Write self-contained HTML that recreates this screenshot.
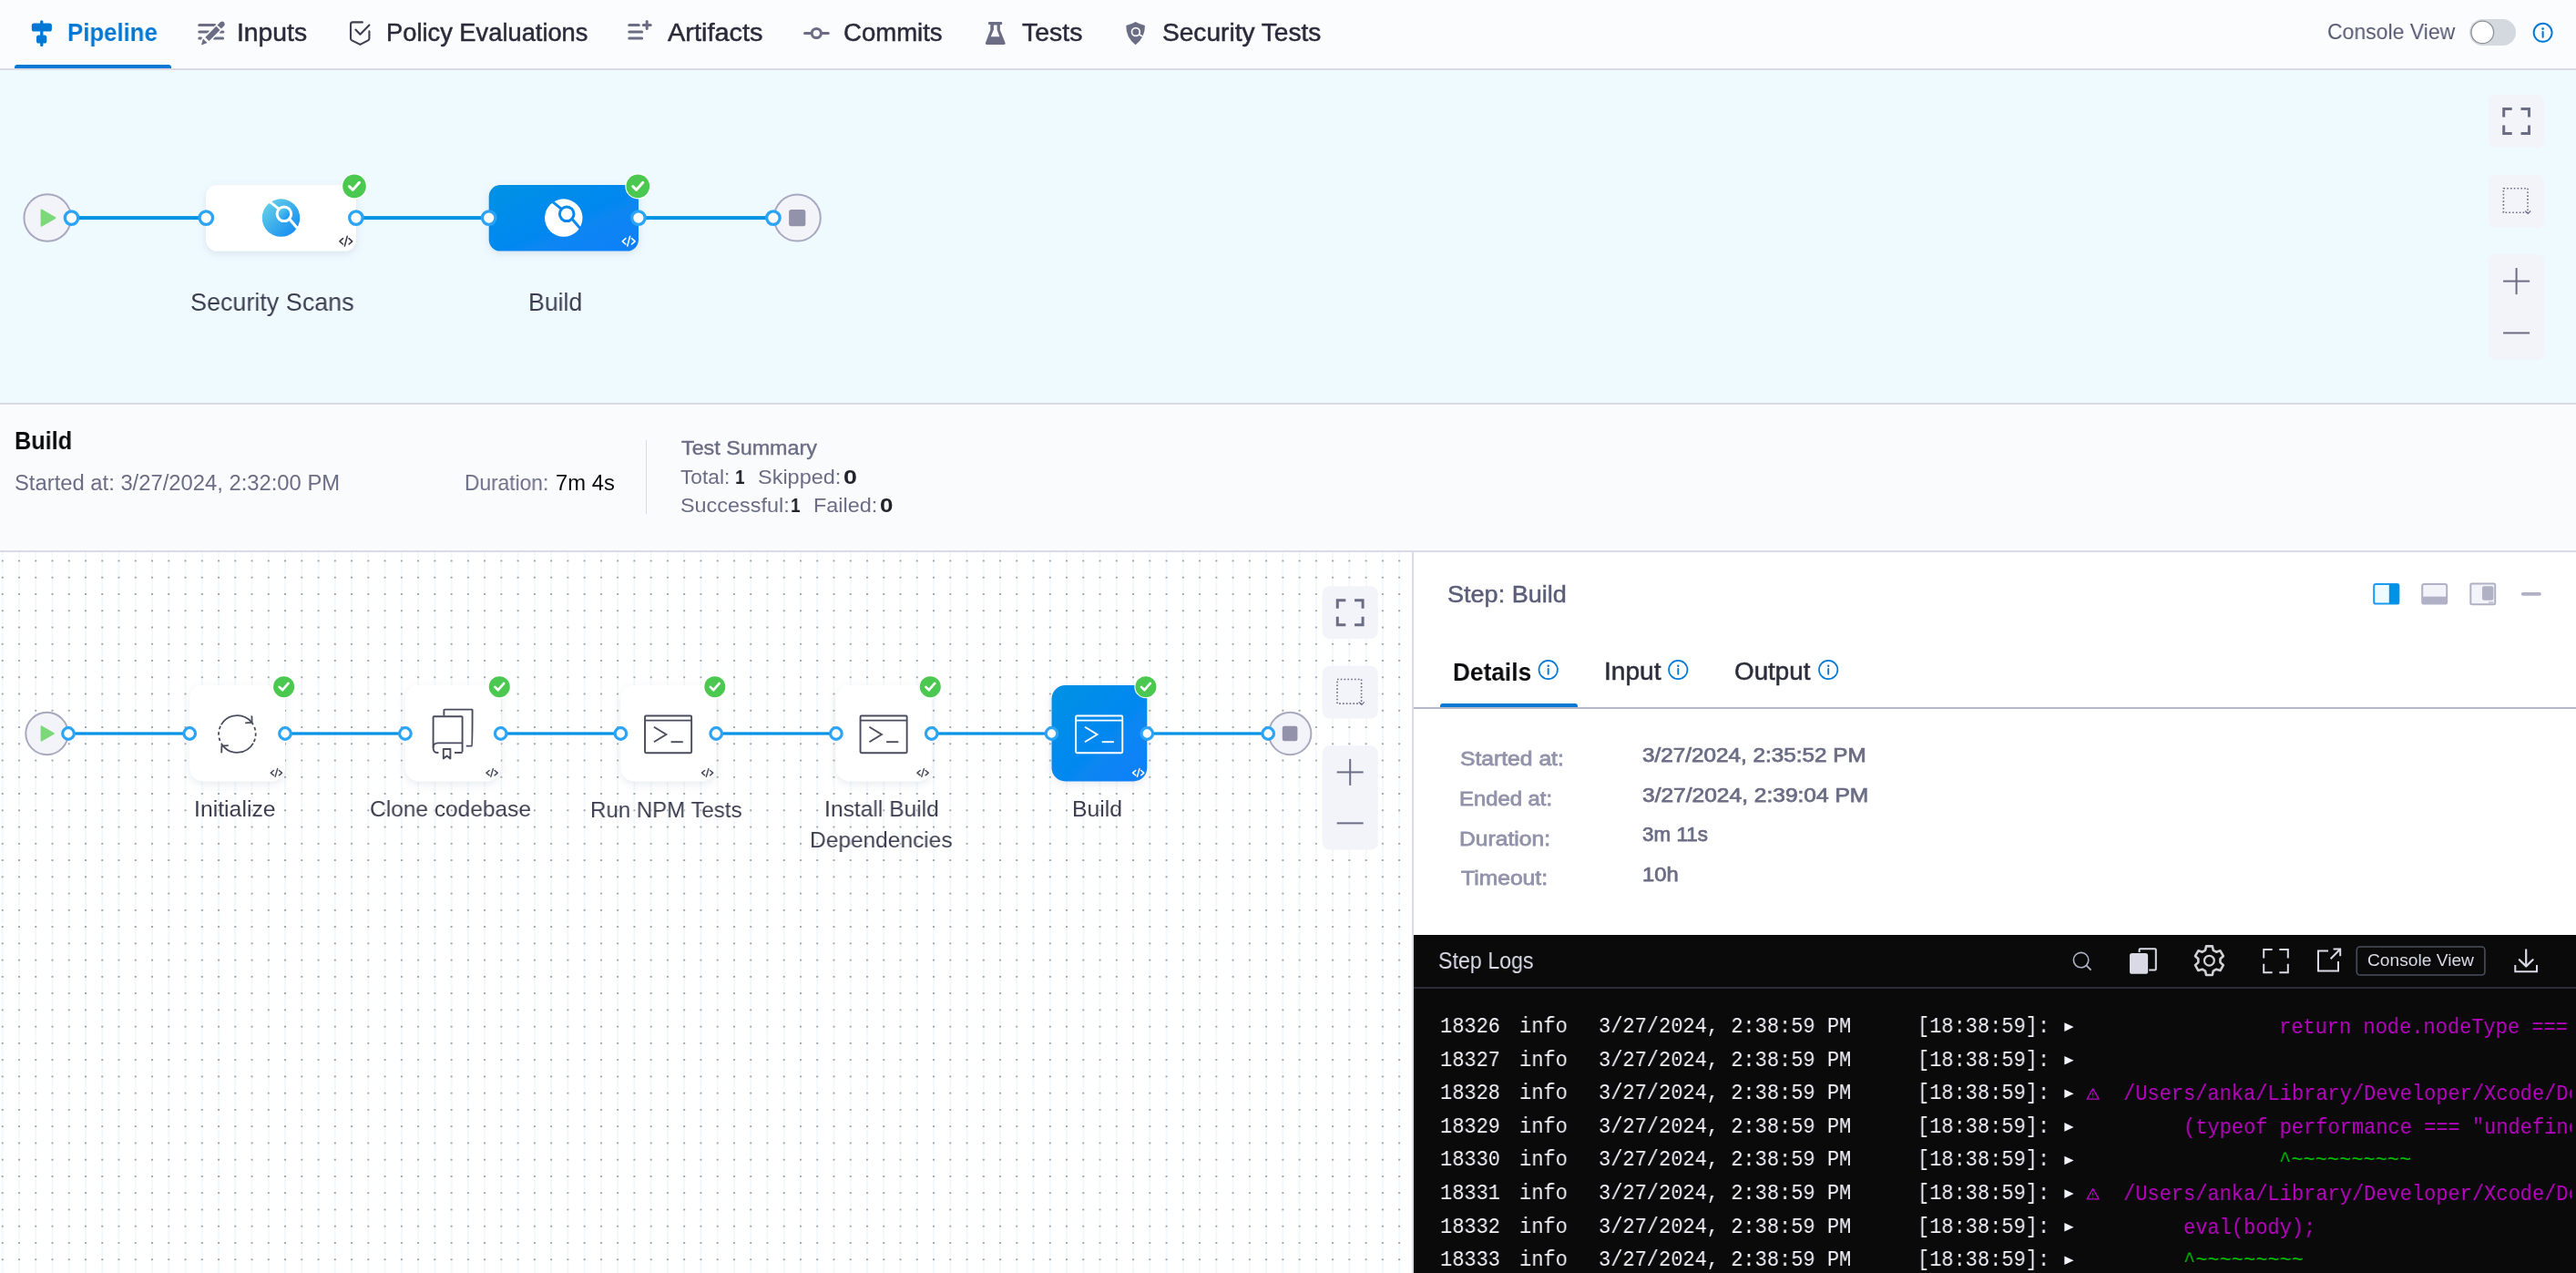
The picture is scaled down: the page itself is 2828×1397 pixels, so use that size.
<!DOCTYPE html><html><head><meta charset="utf-8"><style>
*{margin:0;padding:0;box-sizing:border-box}
html,body{width:2828px;height:1397px;overflow:hidden;background:#FFFFFF}
body{position:relative;font-family:"Liberation Sans",sans-serif}
.t{position:absolute;white-space:pre;line-height:1;transform-origin:0 0;will-change:transform;-webkit-font-smoothing:antialiased}
.m{position:absolute;white-space:pre;line-height:1;will-change:transform;font-family:"Liberation Mono",monospace;font-size:24px;transform-origin:0 0;transform:scaleX(0.9167)}
.b{position:absolute}
</style></head><body><div class="b" style="left:0.00px;top:0.00px;width:2828.00px;height:75.00px;background:#FBFCFE"></div><div class="b" style="left:0.00px;top:75.00px;width:2828.00px;height:2.00px;background:#D9DAE5"></div><div class="b" style="left:16.25px;top:71.00px;width:171.65px;height:4.00px;background:#0278D5;border-radius:3px 3px 0 0"></div><div class="b" style="left:0.00px;top:77.00px;width:2828.00px;height:365.00px;background:#EFFAFF"></div><div class="b" style="left:0.00px;top:442.00px;width:2828.00px;height:2.00px;background:#D9DAE5"></div><div class="b" style="left:0.00px;top:444.00px;width:2828.00px;height:160.00px;background:#FAFBFD"></div><div class="b" style="left:708.50px;top:483.40px;width:1.50px;height:81.00px;background:#D9DAE5"></div><div class="b" style="left:0.00px;top:604.00px;width:2828.00px;height:2.00px;background:#D9DAE5"></div><div class="b" style="left:0.00px;top:606.00px;width:1550.00px;height:791.00px;background:#FFFFFF"></div><div class="b" style="left:1550.00px;top:606.00px;width:2.00px;height:791.00px;background:#D9DAE5"></div><div class="b" style="left:1552.00px;top:606.00px;width:1276.00px;height:791.00px;background:#FFFFFF"></div><div class="b" style="left:1552.00px;top:776.30px;width:1276.00px;height:1.80px;background:#B7B9CA"></div><div class="b" style="left:1581.00px;top:772.20px;width:151.40px;height:4.20px;background:#0278D5;border-radius:3px 3px 0 0"></div><div class="b" style="left:1552.00px;top:1026.00px;width:1276.00px;height:371.00px;background:#0A0A0B"></div><div class="b" style="left:1552.00px;top:1083.20px;width:1276.00px;height:2.00px;background:#2A2B36"></div><svg class="b" style="left:0;top:0" width="2828" height="1397" viewBox="0 0 2828 1397"><defs>
<linearGradient id="gScan" x1="0" y1="0" x2="1" y2="1"><stop offset="0" stop-color="#6FD8E6"/><stop offset="1" stop-color="#0A84F2"/></linearGradient>
<linearGradient id="gBuild" x1="0" y1="0" x2="1" y2="1"><stop offset="0" stop-color="#0092E4"/><stop offset="1" stop-color="#0B7FFA"/></linearGradient>
<linearGradient id="gBuild2" x1="0" y1="0" x2="1" y2="1"><stop offset="0" stop-color="#0092E4"/><stop offset="1" stop-color="#0B7FFA"/></linearGradient>
<pattern id="pDots" width="18.255" height="18.255" patternUnits="userSpaceOnUse" x="1.74" y="614.5"><rect x="0" y="0" width="2" height="2" fill="#A0A4A9"/><rect x="0.1" y="3.1" width="1.8" height="13.7" fill="#F1F8FC"/></pattern>
<filter id="shTop" x="-20%" y="-20%" width="140%" height="160%"><feDropShadow dx="0" dy="3" stdDeviation="4" flood-color="#60718A" flood-opacity="0.16"/></filter>
<filter id="shBot" x="-20%" y="-20%" width="140%" height="150%"><feDropShadow dx="0" dy="3" stdDeviation="4" flood-color="#60718A" flood-opacity="0.14"/></filter>
</defs><rect x="0.00" y="606.00" width="1550.00" height="791.00" rx="0.00" fill="url(#pDots)" stroke="none" stroke-width="0.00" /><rect x="44.10" y="22.20" width="3.30" height="28.80" rx="1.60" fill="#0278D5" stroke="none" stroke-width="0.00" /><rect x="34.80" y="25.60" width="22.10" height="8.90" rx="2.60" fill="#0278D5" stroke="none" stroke-width="0.00" /><rect x="40.00" y="38.50" width="11.30" height="9.00" rx="2.60" fill="#0278D5" stroke="none" stroke-width="0.00" /><line x1="218.80" y1="27.40" x2="236.00" y2="27.40" stroke="#6B6D85" stroke-width="3.00" stroke-linecap="round" /><line x1="218.80" y1="34.90" x2="229.00" y2="34.90" stroke="#6B6D85" stroke-width="3.00" stroke-linecap="round" /><line x1="242.00" y1="34.90" x2="244.80" y2="34.90" stroke="#6B6D85" stroke-width="3.00" stroke-linecap="round" /><line x1="218.80" y1="42.00" x2="221.00" y2="42.00" stroke="#6B6D85" stroke-width="3.00" stroke-linecap="round" /><line x1="235.00" y1="42.00" x2="244.60" y2="42.00" stroke="#6B6D85" stroke-width="3.00" stroke-linecap="round" /><path d="M 225.3 40.9 L 237.3 28.8 L 241.5 33.0 L 229.5 45.1 Z" fill="#FBFCFE" stroke="#FBFCFE" stroke-width="3.00" stroke-linejoin="round"/><path d="M 221.0 49.6 L 222.9 42.6 L 227.6 47.1 Z" fill="#FBFCFE" stroke="#FBFCFE" stroke-width="3.00" stroke-linejoin="round"/><path d="M 238.6 27.4 L 241.9 24.2 Q 244.4 22.6 246.1 24.6 Q 247.6 26.6 245.7 28.8 L 242.9 31.6 Z" fill="#FBFCFE" stroke="#FBFCFE" stroke-width="3.00" stroke-linejoin="round"/><path d="M 225.3 40.9 L 237.3 28.8 L 241.5 33.0 L 229.5 45.1 Z" fill="#6B6D85" stroke="none" stroke-width="0.00" /><path d="M 221.0 49.6 L 222.9 42.6 L 227.6 47.1 Z" fill="#6B6D85" stroke="none" stroke-width="0.00" /><path d="M 238.6 27.4 L 241.9 24.2 Q 244.4 22.6 246.1 24.6 Q 247.6 26.6 245.7 28.8 L 242.9 31.6 Z" fill="#6B6D85" stroke="none" stroke-width="0.00" /><path d="M 397.9 24.4 L 387.4 24.4 Q 385.0 24.4 385.0 26.8 L 385.0 42.3 Q 385.0 43.6 386.4 44.4 L 395.4 48.9 L 404.0 44.4 Q 405.4 43.6 405.4 42.3 L 405.4 34.2" fill="none" stroke="#3E4052" stroke-width="2.10" stroke-linecap="round" stroke-linejoin="round"/><path d="M 390.4 32.6 L 395.4 37.8 L 405.4 27.5" fill="none" stroke="#3E4052" stroke-width="2.10" stroke-linecap="round" stroke-linejoin="round"/><line x1="690.80" y1="27.40" x2="701.20" y2="27.40" stroke="#6B6D85" stroke-width="3.00" stroke-linecap="round" /><line x1="690.80" y1="34.90" x2="704.70" y2="34.90" stroke="#6B6D85" stroke-width="3.00" stroke-linecap="round" /><line x1="690.80" y1="42.00" x2="704.70" y2="42.00" stroke="#6B6D85" stroke-width="3.00" stroke-linecap="round" /><line x1="710.20" y1="23.50" x2="710.20" y2="31.40" stroke="#6B6D85" stroke-width="3.00" stroke-linecap="round" /><line x1="706.30" y1="27.40" x2="714.20" y2="27.40" stroke="#6B6D85" stroke-width="3.00" stroke-linecap="round" /><line x1="883.60" y1="36.50" x2="909.20" y2="36.50" stroke="#6B6D85" stroke-width="3.20" stroke-linecap="round" /><circle cx="896.30" cy="36.50" r="5.10" fill="#FBFCFE" stroke="#6B6D85" stroke-width="3.00" /><path d="M 1085.8 24.1 L 1099.4 24.1 Q 1100.2 24.1 1100.2 25.5 Q 1100.2 27.0 1099.4 27.0 L 1097.9 27.0 L 1097.9 33.0 L 1103.4 46.6 Q 1104.3 49.1 1101.8 49.1 L 1083.7 49.1 Q 1081.2 49.1 1082.1 46.6 L 1087.3 33.0 L 1087.3 27.0 L 1085.8 27.0 Q 1085.0 27.0 1085.0 25.5 Q 1085.0 24.1 1085.8 24.1 Z M 1090.9 27.6 L 1094.6 27.6 L 1094.6 32.8 L 1097.4 40.2 L 1087.7 40.2 L 1090.9 32.8 Z" fill="#6B6D85" stroke="none" stroke-width="0.00" fill-rule="evenodd"/><path d="M 1246.6 24.0 Q 1251.5 26.8 1256.9 28.0 Q 1257.3 41.0 1246.6 49.2 Q 1235.9 41.0 1236.3 28.0 Q 1241.7 26.8 1246.6 24.0 Z" fill="#6B6D85" stroke="none" stroke-width="0.00" /><circle cx="1246.90" cy="35.00" r="4.40" fill="#6B6D85" stroke="#FBFCFE" stroke-width="1.70" /><line x1="1250.20" y1="37.80" x2="1257.50" y2="41.50" stroke="#FBFCFE" stroke-width="1.80" stroke-linecap="butt" /><rect x="2711.00" y="21.00" width="51.00" height="29.00" rx="14.50" fill="#D4D9DF" stroke="none" stroke-width="0.00" /><circle cx="2725.30" cy="35.40" r="12.30" fill="#FFFFFF" stroke="#8E9298" stroke-width="1.30" /><circle cx="2791.60" cy="35.80" r="10.00" fill="none" stroke="#0278D5" stroke-width="1.90" /><circle cx="2791.60" cy="31.60" r="1.30" fill="#0278D5" stroke="none" stroke-width="0.00" /><line x1="2791.60" y1="35.00" x2="2791.60" y2="40.80" stroke="#0278D5" stroke-width="2.10" stroke-linecap="round" /><rect x="78.50" y="237.10" width="147.80" height="4.00" rx="0.00" fill="#0092E4" stroke="none" stroke-width="0.00" /><rect x="390.90" y="237.10" width="145.80" height="4.00" rx="0.00" fill="#0092E4" stroke="none" stroke-width="0.00" /><rect x="700.90" y="237.10" width="148.00" height="4.00" rx="0.00" fill="#0092E4" stroke="none" stroke-width="0.00" /><circle cx="52.20" cy="239.10" r="25.75" fill="#F3F3FA" stroke="#A8A8BF" stroke-width="2.00" /><path d="M 45.60 230.50 L 60.40 239.10 L 45.60 247.70 Z" fill="#7DD87A" stroke="#7DD87A" stroke-width="2.00" stroke-linejoin="round"/><circle cx="875.30" cy="239.10" r="25.50" fill="#F3F3FA" stroke="#A8A8BF" stroke-width="2.00" /><rect x="866.10" y="230.00" width="18.20" height="18.20" rx="2.50" fill="#9293AB" stroke="none" stroke-width="0.00" /><rect x="226.00" y="203.00" width="165.00" height="72.60" rx="12.50" fill="#FFFFFF" stroke="none" stroke-width="0.00" filter="url(#shTop)"/><rect x="536.70" y="203.00" width="164.30" height="72.60" rx="12.50" fill="url(#gBuild)" stroke="none" stroke-width="0.00" filter="url(#shTop)"/><circle cx="308.50" cy="239.10" r="20.75" fill="url(#gScan)" stroke="none" stroke-width="0.00" /><circle cx="311.90" cy="234.80" r="7.80" fill="url(#gScan)" stroke="#FFFFFF" stroke-width="3.00" /><line x1="296.50" y1="221.60" x2="307.10" y2="230.20" stroke="#FFFFFF" stroke-width="3.00" stroke-linecap="butt" /><line x1="317.20" y1="239.80" x2="326.50" y2="250.60" stroke="#FFFFFF" stroke-width="3.00" stroke-linecap="butt" /><circle cx="618.80" cy="239.10" r="20.75" fill="#FFFFFF" stroke="none" stroke-width="0.00" /><circle cx="622.20" cy="234.80" r="7.80" fill="#FFFFFF" stroke="url(#gBuild)" stroke-width="3.00" /><line x1="606.80" y1="221.60" x2="617.40" y2="230.20" stroke="url(#gBuild)" stroke-width="3.00" stroke-linecap="butt" /><line x1="627.50" y1="239.80" x2="636.80" y2="250.60" stroke="url(#gBuild)" stroke-width="3.00" stroke-linecap="butt" /><path d="M 376.49 261.58 L 372.89 264.82 L 376.49 268.06 M 383.11 261.58 L 386.71 264.82 L 383.11 268.06 M 381.24 259.20 L 378.36 270.00" fill="none" stroke="#383946" stroke-width="1.50" stroke-linecap="round" stroke-linejoin="round"/><path d="M 686.89 261.58 L 683.29 264.82 L 686.89 268.06 M 693.51 261.58 L 697.11 264.82 L 693.51 268.06 M 691.64 259.20 L 688.76 270.00" fill="none" stroke="#FFFFFF" stroke-width="1.50" stroke-linecap="round" stroke-linejoin="round"/><circle cx="78.50" cy="239.10" r="7.25" fill="#FFFFFF" stroke="#2CA4F6" stroke-width="3.30" /><circle cx="226.30" cy="239.10" r="7.25" fill="#FFFFFF" stroke="#2CA4F6" stroke-width="3.30" /><circle cx="390.90" cy="239.10" r="7.25" fill="#FFFFFF" stroke="#2CA4F6" stroke-width="3.30" /><circle cx="536.70" cy="239.10" r="7.25" fill="#FFFFFF" stroke="#2CA4F6" stroke-width="3.30" /><circle cx="700.90" cy="239.10" r="7.25" fill="#FFFFFF" stroke="#2CA4F6" stroke-width="3.30" /><circle cx="848.90" cy="239.10" r="7.25" fill="#FFFFFF" stroke="#2CA4F6" stroke-width="3.30" /><circle cx="389.00" cy="204.40" r="13.98" fill="#FFFFFF" stroke="none" stroke-width="0.00" /><circle cx="389.00" cy="204.40" r="12.80" fill="#4BC84F" stroke="none" stroke-width="0.00" /><path d="M 383.49 204.60 L 387.42 208.34 L 394.51 200.26" fill="none" stroke="#FFFFFF" stroke-width="2.95" stroke-linecap="round" stroke-linejoin="round"/><circle cx="700.30" cy="204.40" r="13.98" fill="#FFFFFF" stroke="none" stroke-width="0.00" /><circle cx="700.30" cy="204.40" r="12.80" fill="#4BC84F" stroke="none" stroke-width="0.00" /><path d="M 694.79 204.60 L 698.72 208.34 L 705.81 200.26" fill="none" stroke="#FFFFFF" stroke-width="2.95" stroke-linecap="round" stroke-linejoin="round"/><rect x="2732.00" y="104.00" width="61.20" height="57.80" rx="8.00" fill="#F3F3FA" stroke="none" stroke-width="0.00" /><rect x="2732.00" y="192.00" width="61.20" height="57.80" rx="8.00" fill="#F3F3FA" stroke="none" stroke-width="0.00" /><rect x="2732.00" y="279.00" width="61.20" height="116.00" rx="8.00" fill="#F3F3FA" stroke="none" stroke-width="0.00" /><path d="M 2757.70 119.42 L 2748.70 119.42 L 2748.70 128.42 M 2757.70 146.38 L 2748.70 146.38 L 2748.70 137.38 M 2767.50 119.42 L 2776.50 119.42 L 2776.50 128.42 M 2767.50 146.38 L 2776.50 146.38 L 2776.50 137.38 " fill="none" stroke="#6B6D85" stroke-width="3.00" /><rect x="2748.40" y="206.70" width="26.60" height="26.60" rx="0.00" fill="none" stroke="#6B6D85" stroke-width="1.60" stroke-dasharray="1.6 2.2"/><path d="M 2772.20 231.50 l 3 3 l 3 -3" fill="none" stroke="#6B6D85" stroke-width="1.20" /><line x1="2748.10" y1="308.58" x2="2777.10" y2="308.58" stroke="#6B6D85" stroke-width="2.00" stroke-linecap="butt" /><line x1="2762.60" y1="294.08" x2="2762.60" y2="323.08" stroke="#6B6D85" stroke-width="2.00" stroke-linecap="butt" /><line x1="2748.10" y1="365.42" x2="2777.10" y2="365.42" stroke="#6B6D85" stroke-width="2.00" stroke-linecap="butt" /><rect x="75.00" y="803.40" width="133.20" height="3.20" rx="0.00" fill="#0092E4" stroke="none" stroke-width="0.00" /><rect x="313.00" y="803.40" width="131.90" height="3.20" rx="0.00" fill="#0092E4" stroke="none" stroke-width="0.00" /><rect x="549.70" y="803.40" width="131.70" height="3.20" rx="0.00" fill="#0092E4" stroke="none" stroke-width="0.00" /><rect x="786.20" y="803.40" width="131.70" height="3.20" rx="0.00" fill="#0092E4" stroke="none" stroke-width="0.00" /><rect x="1022.70" y="803.40" width="131.80" height="3.20" rx="0.00" fill="#0092E4" stroke="none" stroke-width="0.00" /><rect x="1259.30" y="803.40" width="132.90" height="3.20" rx="0.00" fill="#0092E4" stroke="none" stroke-width="0.00" /><circle cx="51.50" cy="805.00" r="23.20" fill="#F3F3FA" stroke="#A8A8BF" stroke-width="2.00" /><path d="M 45.53 797.22 L 58.92 805.00 L 45.53 812.78 Z" fill="#7DD87A" stroke="#7DD87A" stroke-width="1.81" stroke-linejoin="round"/><circle cx="1416.20" cy="805.00" r="23.20" fill="#F3F3FA" stroke="#A8A8BF" stroke-width="2.00" /><rect x="1407.80" y="796.69" width="16.62" height="16.62" rx="2.28" fill="#9293AB" stroke="none" stroke-width="0.00" /><rect x="208.20" y="752.00" width="104.80" height="105.50" rx="15.00" fill="#FFFFFF" stroke="none" stroke-width="0.00" filter="url(#shBot)"/><rect x="444.90" y="752.00" width="104.80" height="105.50" rx="15.00" fill="#FFFFFF" stroke="none" stroke-width="0.00" filter="url(#shBot)"/><rect x="681.40" y="752.00" width="104.80" height="105.50" rx="15.00" fill="#FFFFFF" stroke="none" stroke-width="0.00" filter="url(#shBot)"/><rect x="917.90" y="752.00" width="104.80" height="105.50" rx="15.00" fill="#FFFFFF" stroke="none" stroke-width="0.00" filter="url(#shBot)"/><rect x="1154.50" y="752.00" width="104.80" height="105.50" rx="15.00" fill="url(#gBuild2)" stroke="none" stroke-width="0.00" filter="url(#shBot)"/><path d="M 242.82 795.35 A 20.30 20.30 0 0 1 275.95 792.45" fill="none" stroke="#4A4C5E" stroke-width="1.80" /><path d="M 277.98 815.65 A 20.30 20.30 0 0 1 244.85 818.55" fill="none" stroke="#4A4C5E" stroke-width="1.80" /><path d="M 244.85 818.55 A 20.30 20.30 0 0 1 242.82 795.35" fill="none" stroke="#4A4C5E" stroke-width="1.80" stroke-dasharray="3.5 3"/><path d="M 275.95 792.45 A 20.30 20.30 0 0 1 277.98 815.65" fill="none" stroke="#4A4C5E" stroke-width="1.80" stroke-dasharray="3.5 3"/><path d="M 276.40 785.50 L 276.60 792.90 L 269.20 793.30" fill="none" stroke="#4A4C5E" stroke-width="1.80" /><path d="M 243.20 826.30 L 243.40 818.50 L 250.80 818.10" fill="none" stroke="#4A4C5E" stroke-width="1.80" /><path d="M 487.40 785.40 L 487.40 779.20 Q 487.40 778.60 488.40 778.60 L 518.00 778.60 L 518.60 779.20 Q 518.60 818.00 517.80 818.60 L 511.80 818.60" fill="none" stroke="#4A4C5E" stroke-width="1.90" /><path d="M 481.40 826.00 L 480.00 826.00 Q 475.60 826.00 475.60 820.50 L 475.60 787.00 Q 475.60 786.20 476.50 786.20 L 506.80 786.20 Q 507.60 786.20 507.60 787.00 L 507.60 825.20" fill="none" stroke="#4A4C5E" stroke-width="1.90" /><path d="M 475.60 820.50 Q 475.60 815.40 481.00 815.40 L 507.60 815.40" fill="none" stroke="#4A4C5E" stroke-width="1.90" /><path d="M 499.00 826.00 L 507.60 826.00" fill="none" stroke="#4A4C5E" stroke-width="1.90" /><path d="M 486.80 822.00 L 486.80 832.40 L 490.60 829.40 L 494.40 832.40 L 494.40 822.00 Z" fill="none" stroke="#4A4C5E" stroke-width="1.90" stroke-linejoin="round"/><rect x="708.05" y="785.55" width="51.10" height="40.70" rx="1.20" fill="none" stroke="#4A4C5E" stroke-width="1.90" /><line x1="708.05" y1="790.60" x2="759.15" y2="790.60" stroke="#4A4C5E" stroke-width="1.90" stroke-linecap="butt" /><path d="M 717.90 797.80 L 731.40 806.00 L 717.90 814.20" fill="none" stroke="#4A4C5E" stroke-width="1.90" /><line x1="736.60" y1="814.20" x2="749.80" y2="814.20" stroke="#4A4C5E" stroke-width="1.90" stroke-linecap="butt" /><rect x="944.55" y="785.55" width="51.10" height="40.70" rx="1.20" fill="none" stroke="#4A4C5E" stroke-width="1.90" /><line x1="944.55" y1="790.60" x2="995.65" y2="790.60" stroke="#4A4C5E" stroke-width="1.90" stroke-linecap="butt" /><path d="M 954.40 797.80 L 967.90 806.00 L 954.40 814.20" fill="none" stroke="#4A4C5E" stroke-width="1.90" /><line x1="973.10" y1="814.20" x2="986.30" y2="814.20" stroke="#4A4C5E" stroke-width="1.90" stroke-linecap="butt" /><rect x="1181.15" y="785.55" width="51.10" height="40.70" rx="1.20" fill="none" stroke="#FFFFFF" stroke-width="1.90" /><line x1="1181.15" y1="790.60" x2="1232.25" y2="790.60" stroke="#FFFFFF" stroke-width="1.90" stroke-linecap="butt" /><path d="M 1191.00 797.80 L 1204.50 806.00 L 1191.00 814.20" fill="none" stroke="#FFFFFF" stroke-width="1.90" /><line x1="1209.70" y1="814.20" x2="1222.90" y2="814.20" stroke="#FFFFFF" stroke-width="1.90" stroke-linecap="butt" /><path d="M 300.46 845.54 L 297.26 848.18 L 300.46 850.82 M 306.34 845.54 L 309.54 848.18 L 306.34 850.82 M 304.68 843.60 L 302.12 852.40" fill="none" stroke="#4A4C5E" stroke-width="1.50" stroke-linecap="round" stroke-linejoin="round"/><path d="M 537.16 845.54 L 533.96 848.18 L 537.16 850.82 M 543.04 845.54 L 546.24 848.18 L 543.04 850.82 M 541.38 843.60 L 538.82 852.40" fill="none" stroke="#4A4C5E" stroke-width="1.50" stroke-linecap="round" stroke-linejoin="round"/><path d="M 773.66 845.54 L 770.46 848.18 L 773.66 850.82 M 779.54 845.54 L 782.74 848.18 L 779.54 850.82 M 777.88 843.60 L 775.32 852.40" fill="none" stroke="#4A4C5E" stroke-width="1.50" stroke-linecap="round" stroke-linejoin="round"/><path d="M 1010.16 845.54 L 1006.96 848.18 L 1010.16 850.82 M 1016.04 845.54 L 1019.24 848.18 L 1016.04 850.82 M 1014.38 843.60 L 1011.82 852.40" fill="none" stroke="#4A4C5E" stroke-width="1.50" stroke-linecap="round" stroke-linejoin="round"/><path d="M 1246.76 845.54 L 1243.56 848.18 L 1246.76 850.82 M 1252.64 845.54 L 1255.84 848.18 L 1252.64 850.82 M 1250.98 843.60 L 1248.42 852.40" fill="none" stroke="#FFFFFF" stroke-width="1.50" stroke-linecap="round" stroke-linejoin="round"/><circle cx="208.20" cy="805.00" r="6.30" fill="#FFFFFF" stroke="#2CA4F6" stroke-width="3.20" /><circle cx="313.00" cy="805.00" r="6.30" fill="#FFFFFF" stroke="#2CA4F6" stroke-width="3.20" /><circle cx="444.90" cy="805.00" r="6.30" fill="#FFFFFF" stroke="#2CA4F6" stroke-width="3.20" /><circle cx="549.70" cy="805.00" r="6.30" fill="#FFFFFF" stroke="#2CA4F6" stroke-width="3.20" /><circle cx="681.40" cy="805.00" r="6.30" fill="#FFFFFF" stroke="#2CA4F6" stroke-width="3.20" /><circle cx="786.20" cy="805.00" r="6.30" fill="#FFFFFF" stroke="#2CA4F6" stroke-width="3.20" /><circle cx="917.90" cy="805.00" r="6.30" fill="#FFFFFF" stroke="#2CA4F6" stroke-width="3.20" /><circle cx="1022.70" cy="805.00" r="6.30" fill="#FFFFFF" stroke="#2CA4F6" stroke-width="3.20" /><circle cx="1154.50" cy="805.00" r="6.30" fill="#FFFFFF" stroke="#2CA4F6" stroke-width="3.20" /><circle cx="1259.30" cy="805.00" r="6.30" fill="#FFFFFF" stroke="#2CA4F6" stroke-width="3.20" /><circle cx="75.00" cy="805.00" r="6.30" fill="#FFFFFF" stroke="#2CA4F6" stroke-width="3.20" /><circle cx="1392.20" cy="805.00" r="6.30" fill="#FFFFFF" stroke="#2CA4F6" stroke-width="3.20" /><circle cx="311.60" cy="753.70" r="12.56" fill="#FFFFFF" stroke="none" stroke-width="0.00" /><circle cx="311.60" cy="753.70" r="11.50" fill="#4BC84F" stroke="none" stroke-width="0.00" /><path d="M 306.65 753.88 L 310.18 757.24 L 316.55 749.98" fill="none" stroke="#FFFFFF" stroke-width="2.65" stroke-linecap="round" stroke-linejoin="round"/><circle cx="548.30" cy="753.70" r="12.56" fill="#FFFFFF" stroke="none" stroke-width="0.00" /><circle cx="548.30" cy="753.70" r="11.50" fill="#4BC84F" stroke="none" stroke-width="0.00" /><path d="M 543.35 753.88 L 546.88 757.24 L 553.25 749.98" fill="none" stroke="#FFFFFF" stroke-width="2.65" stroke-linecap="round" stroke-linejoin="round"/><circle cx="784.80" cy="753.70" r="12.56" fill="#FFFFFF" stroke="none" stroke-width="0.00" /><circle cx="784.80" cy="753.70" r="11.50" fill="#4BC84F" stroke="none" stroke-width="0.00" /><path d="M 779.85 753.88 L 783.38 757.24 L 789.75 749.98" fill="none" stroke="#FFFFFF" stroke-width="2.65" stroke-linecap="round" stroke-linejoin="round"/><circle cx="1021.30" cy="753.70" r="12.56" fill="#FFFFFF" stroke="none" stroke-width="0.00" /><circle cx="1021.30" cy="753.70" r="11.50" fill="#4BC84F" stroke="none" stroke-width="0.00" /><path d="M 1016.35 753.88 L 1019.88 757.24 L 1026.25 749.98" fill="none" stroke="#FFFFFF" stroke-width="2.65" stroke-linecap="round" stroke-linejoin="round"/><circle cx="1257.90" cy="753.70" r="12.56" fill="#FFFFFF" stroke="none" stroke-width="0.00" /><circle cx="1257.90" cy="753.70" r="11.50" fill="#4BC84F" stroke="none" stroke-width="0.00" /><path d="M 1252.95 753.88 L 1256.48 757.24 L 1262.85 749.98" fill="none" stroke="#FFFFFF" stroke-width="2.65" stroke-linecap="round" stroke-linejoin="round"/><rect x="1451.60" y="643.30" width="61.20" height="57.80" rx="8.00" fill="#F3F3FA" stroke="none" stroke-width="0.00" /><rect x="1451.60" y="730.80" width="61.20" height="57.80" rx="8.00" fill="#F3F3FA" stroke="none" stroke-width="0.00" /><rect x="1451.60" y="818.30" width="61.20" height="114.20" rx="8.00" fill="#F3F3FA" stroke="none" stroke-width="0.00" /><path d="M 1477.30 658.72 L 1468.30 658.72 L 1468.30 667.72 M 1477.30 685.68 L 1468.30 685.68 L 1468.30 676.68 M 1487.10 658.72 L 1496.10 658.72 L 1496.10 667.72 M 1487.10 685.68 L 1496.10 685.68 L 1496.10 676.68 " fill="none" stroke="#6B6D85" stroke-width="3.00" /><rect x="1468.00" y="745.50" width="26.60" height="26.60" rx="0.00" fill="none" stroke="#6B6D85" stroke-width="1.60" stroke-dasharray="1.6 2.2"/><path d="M 1491.80 770.30 l 3 3 l 3 -3" fill="none" stroke="#6B6D85" stroke-width="1.20" /><line x1="1467.70" y1="847.42" x2="1496.70" y2="847.42" stroke="#6B6D85" stroke-width="2.00" stroke-linecap="butt" /><line x1="1482.20" y1="832.92" x2="1482.20" y2="861.92" stroke="#6B6D85" stroke-width="2.00" stroke-linecap="butt" /><line x1="1467.70" y1="903.38" x2="1496.70" y2="903.38" stroke="#6B6D85" stroke-width="2.00" stroke-linecap="butt" /><rect x="2606.20" y="640.90" width="27.20" height="21.70" rx="2.20" fill="#EFFAFF" stroke="#1A9BF0" stroke-width="2.00" /><rect x="2622.80" y="640.90" width="10.80" height="21.70" rx="0.00" fill="#0092E4" stroke="none" stroke-width="0.00" /><rect x="2622.80" y="640.90" width="10.80" height="21.70" rx="0.00" fill="none" stroke="#1A9BF0" stroke-width="0.00" /><rect x="2659.20" y="640.90" width="27.00" height="21.70" rx="2.20" fill="#F3F3FA" stroke="#B0B1C4" stroke-width="2.00" /><rect x="2659.20" y="654.70" width="27.00" height="7.90" rx="0.00" fill="#B0B1C4" stroke="none" stroke-width="0.00" /><rect x="2712.30" y="640.40" width="26.90" height="22.80" rx="1.50" fill="#F3F3FA" stroke="#B0B1C4" stroke-width="2.00" /><rect x="2725.00" y="643.20" width="12.40" height="15.60" rx="2.00" fill="#B0B1C4" stroke="none" stroke-width="0.00" /><line x1="2732.00" y1="661.00" x2="2737.20" y2="661.00" stroke="#B0B1C4" stroke-width="1.20" stroke-linecap="butt" /><line x1="2769.60" y1="651.90" x2="2788.00" y2="651.90" stroke="#B0B1C4" stroke-width="3.60" stroke-linecap="round" /><circle cx="1699.70" cy="735.00" r="10.20" fill="none" stroke="#0278D5" stroke-width="1.70" /><circle cx="1699.70" cy="730.80" r="1.20" fill="#0278D5" stroke="none" stroke-width="0.00" /><line x1="1699.70" y1="734.00" x2="1699.70" y2="739.80" stroke="#0278D5" stroke-width="1.90" stroke-linecap="round" /><circle cx="1842.30" cy="735.00" r="10.20" fill="none" stroke="#0278D5" stroke-width="1.70" /><circle cx="1842.30" cy="730.80" r="1.20" fill="#0278D5" stroke="none" stroke-width="0.00" /><line x1="1842.30" y1="734.00" x2="1842.30" y2="739.80" stroke="#0278D5" stroke-width="1.90" stroke-linecap="round" /><circle cx="2007.20" cy="735.00" r="10.20" fill="none" stroke="#0278D5" stroke-width="1.70" /><circle cx="2007.20" cy="730.80" r="1.20" fill="#0278D5" stroke="none" stroke-width="0.00" /><line x1="2007.20" y1="734.00" x2="2007.20" y2="739.80" stroke="#0278D5" stroke-width="1.90" stroke-linecap="round" /><circle cx="2284.60" cy="1053.60" r="8.20" fill="none" stroke="#B0B1C4" stroke-width="1.60" /><line x1="2290.60" y1="1059.60" x2="2295.00" y2="1064.00" stroke="#B0B1C4" stroke-width="1.80" stroke-linecap="round" /><path d="M 2348.6 1045.0 L 2348.6 1042.2 Q 2348.6 1041.2 2349.6 1041.2 L 2365.8 1041.2 Q 2366.8 1041.2 2366.8 1042.2 L 2366.8 1063.4 Q 2366.8 1064.4 2365.8 1064.4 L 2359.2 1064.4" fill="none" stroke="#D9DAE5" stroke-width="2.00" /><rect x="2338.00" y="1046.10" width="20.10" height="22.70" rx="2.60" fill="#D9DAE5" stroke="none" stroke-width="0.00" /><path d="M 2422.03 1038.35 L 2428.77 1038.35 L 2429.77 1042.81 L 2433.08 1044.72 L 2437.44 1043.36 L 2440.81 1049.19 L 2437.45 1052.29 L 2437.45 1056.11 L 2440.81 1059.21 L 2437.44 1065.04 L 2433.08 1063.68 L 2429.77 1065.59 L 2428.77 1070.05 L 2422.03 1070.05 L 2421.03 1065.59 L 2417.72 1063.68 L 2413.36 1065.04 L 2409.99 1059.21 L 2413.35 1056.11 L 2413.35 1052.29 L 2409.99 1049.19 L 2413.36 1043.36 L 2417.72 1044.72 L 2421.03 1042.81 Z" fill="none" stroke="#D0D0D5" stroke-width="2.60" stroke-linejoin="round"/><circle cx="2425.40" cy="1054.20" r="5.40" fill="none" stroke="#D0D0D5" stroke-width="2.20" /><path d="M 2485.20 1051.40 L 2485.20 1041.90 L 2494.70 1041.90 M 2502.30 1041.90 L 2511.80 1041.90 L 2511.80 1051.40 M 2485.20 1057.80 L 2485.20 1067.30 L 2494.70 1067.30 M 2502.30 1067.30 L 2511.80 1067.30 L 2511.80 1057.80 " fill="none" stroke="#D9DAE5" stroke-width="2.00" /><path d="M 2556.0 1043.6 L 2545.0 1043.6 L 2545.0 1065.6 L 2567.0 1065.6 L 2567.0 1055.0" fill="none" stroke="#D9DAE5" stroke-width="2.00" /><path d="M 2558.6 1052.2 L 2569.0 1041.8 M 2561.6 1041.6 L 2569.2 1041.6 L 2569.2 1049.2" fill="none" stroke="#D9DAE5" stroke-width="2.00" /><rect x="2587.30" y="1039.00" width="140.60" height="31.00" rx="3.50" fill="none" stroke="#4B4D5E" stroke-width="1.60" /><path d="M 2761.3 1059.0 L 2761.3 1066.3 L 2785.0 1066.3 L 2785.0 1059.0" fill="none" stroke="#D9DAE5" stroke-width="2.00" /><line x1="2773.20" y1="1042.40" x2="2773.20" y2="1060.20" stroke="#D9DAE5" stroke-width="2.20" stroke-linecap="round" /><path d="M 2765.8 1053.2 L 2773.2 1060.4 L 2780.6 1053.2" fill="none" stroke="#D9DAE5" stroke-width="2.20" stroke-linecap="round" stroke-linejoin="round"/><path d="M 2266.4 1122.30 L 2276.6 1127.10 L 2266.4 1131.90 Z" fill="#F3F3FA" stroke="none" stroke-width="0.00" /><path d="M 2266.4 1158.90 L 2276.6 1163.70 L 2266.4 1168.50 Z" fill="#F3F3FA" stroke="none" stroke-width="0.00" /><path d="M 2266.4 1195.50 L 2276.6 1200.30 L 2266.4 1205.10 Z" fill="#F3F3FA" stroke="none" stroke-width="0.00" /><path d="M 2266.4 1232.10 L 2276.6 1236.90 L 2266.4 1241.70 Z" fill="#F3F3FA" stroke="none" stroke-width="0.00" /><path d="M 2266.4 1268.70 L 2276.6 1273.50 L 2266.4 1278.30 Z" fill="#F3F3FA" stroke="none" stroke-width="0.00" /><path d="M 2266.4 1305.30 L 2276.6 1310.10 L 2266.4 1314.90 Z" fill="#F3F3FA" stroke="none" stroke-width="0.00" /><path d="M 2266.4 1341.90 L 2276.6 1346.70 L 2266.4 1351.50 Z" fill="#F3F3FA" stroke="none" stroke-width="0.00" /><path d="M 2266.4 1378.50 L 2276.6 1383.30 L 2266.4 1388.10 Z" fill="#F3F3FA" stroke="none" stroke-width="0.00" /><path d="M 2297.60 1194.70 L 2304.20 1206.10 L 2291.20 1206.10 Z" fill="none" stroke="#BC03C5" stroke-width="1.30" stroke-linejoin="round"/><line x1="2297.60" y1="1198.90" x2="2297.60" y2="1202.30" stroke="#BC03C5" stroke-width="1.20" stroke-linecap="butt" /><circle cx="2297.60" cy="1204.10" r="0.60" fill="#BC03C5" stroke="none" stroke-width="0.00" /><path d="M 2297.60 1304.50 L 2304.20 1315.90 L 2291.20 1315.90 Z" fill="none" stroke="#BC03C5" stroke-width="1.30" stroke-linejoin="round"/><line x1="2297.60" y1="1308.70" x2="2297.60" y2="1312.10" stroke="#BC03C5" stroke-width="1.20" stroke-linecap="butt" /><circle cx="2297.60" cy="1313.90" r="0.60" fill="#BC03C5" stroke="none" stroke-width="0.00" /></svg><div class="t" style="left:74.32px;top:22.43px;font-size:27.2px;color:#0278D5;font-weight:700;transform:scaleX(0.9469);">Pipeline</div><div class="t" style="left:259.95px;top:22.85px;font-size:26.8px;color:#2A2B3A;-webkit-text-stroke:0.48px #2A2B3A;transform:scaleX(1.0563);">Inputs</div><div class="t" style="left:423.76px;top:22.85px;font-size:26.8px;color:#2A2B3A;-webkit-text-stroke:0.48px #2A2B3A;transform:scaleX(1.0183);">Policy Evaluations</div><div class="t" style="left:733.24px;top:22.85px;font-size:26.8px;color:#2A2B3A;-webkit-text-stroke:0.48px #2A2B3A;transform:scaleX(1.0804);">Artifacts</div><div class="t" style="left:925.77px;top:22.85px;font-size:26.8px;color:#2A2B3A;-webkit-text-stroke:0.48px #2A2B3A;transform:scaleX(1.0277);">Commits</div><div class="t" style="left:1122.47px;top:22.85px;font-size:26.8px;color:#2A2B3A;-webkit-text-stroke:0.48px #2A2B3A;transform:scaleX(1.0611);">Tests</div><div class="t" style="left:1275.98px;top:22.85px;font-size:26.8px;color:#2A2B3A;-webkit-text-stroke:0.48px #2A2B3A;transform:scaleX(1.0487);">Security Tests</div><div class="t" style="left:2555.35px;top:23.48px;font-size:24.0px;color:#555871;transform:scaleX(0.9580);">Console View</div><div class="t" style="left:209.39px;top:318.23px;font-size:27.2px;color:#3C3E50;transform:scaleX(0.9907);text-shadow:0 0 2px #EFFAFF,0 0 2px #EFFAFF;">Security Scans</div><div class="t" style="left:579.86px;top:318.33px;font-size:27.2px;color:#3C3E50;transform:scaleX(0.9809);text-shadow:0 0 2px #EFFAFF,0 0 2px #EFFAFF;">Build</div><div class="t" style="left:15.76px;top:471.14px;font-size:27.0px;color:#0B0B0D;font-weight:700;transform:scaleX(0.9345);">Build</div><div class="t" style="left:16.33px;top:518.90px;font-size:23.5px;color:#6B6D85;transform:scaleX(1.0124);">Started at: 3/27/2024, 2:32:00 PM</div><div class="t" style="left:509.59px;top:518.39px;font-size:23.8px;color:#6B6D85;transform:scaleX(0.9548);">Duration:</div><div class="t" style="left:609.62px;top:518.39px;font-size:23.8px;color:#0B0B0D;transform:scaleX(0.9936);">7m 4s</div><div class="t" style="left:747.53px;top:481.48px;font-size:21.8px;color:#6B6D85;-webkit-text-stroke:0.39px #6B6D85;transform:scaleX(1.0690);">Test Summary</div><div class="t" style="left:747.35px;top:512.55px;font-size:22.5px;color:#6B6D85;transform:scaleX(1.0100);">Total:</div><div class="t" style="left:806.66px;top:512.55px;font-size:22.5px;color:#22222A;font-weight:700;transform:scaleX(0.8416);">1</div><div class="t" style="left:832.44px;top:512.55px;font-size:22.5px;color:#6B6D85;transform:scaleX(1.0428);">Skipped:</div><div class="t" style="left:926.03px;top:512.55px;font-size:22.5px;color:#22222A;font-weight:700;transform:scaleX(1.1883);">0</div><div class="t" style="left:746.75px;top:543.65px;font-size:22.5px;color:#6B6D85;transform:scaleX(1.0399);">Successful:</div><div class="t" style="left:867.96px;top:543.65px;font-size:22.5px;color:#22222A;font-weight:700;transform:scaleX(0.8416);">1</div><div class="t" style="left:893.03px;top:543.65px;font-size:22.5px;color:#6B6D85;transform:scaleX(1.0412);">Failed:</div><div class="t" style="left:965.66px;top:543.65px;font-size:22.5px;color:#22222A;font-weight:700;transform:scaleX(1.1509);">0</div><div class="t" style="left:213.27px;top:876.24px;font-size:24.8px;color:#3C3E50;text-shadow:0 0 2px #FFFFFF,0 0 2px #FFFFFF,0 0 1px #FFFFFF;">Initialize</div><div class="t" style="left:406.28px;top:876.34px;font-size:24.8px;color:#3C3E50;transform:scaleX(0.9872);text-shadow:0 0 2px #FFFFFF,0 0 2px #FFFFFF,0 0 1px #FFFFFF;">Clone codebase</div><div class="t" style="left:647.98px;top:876.54px;font-size:24.8px;color:#3C3E50;transform:scaleX(0.9693);text-shadow:0 0 2px #FFFFFF,0 0 2px #FFFFFF,0 0 1px #FFFFFF;">Run NPM Tests</div><div class="t" style="left:904.79px;top:876.34px;font-size:24.8px;color:#3C3E50;transform:scaleX(0.9922);text-shadow:0 0 2px #FFFFFF,0 0 2px #FFFFFF,0 0 1px #FFFFFF;">Install Build</div><div class="t" style="left:889.44px;top:909.84px;font-size:24.8px;color:#3C3E50;transform:scaleX(0.9876);text-shadow:0 0 2px #FFFFFF,0 0 2px #FFFFFF,0 0 1px #FFFFFF;">Dependencies</div><div class="t" style="left:1176.62px;top:876.34px;font-size:24.8px;color:#3C3E50;text-shadow:0 0 2px #FFFFFF,0 0 2px #FFFFFF,0 0 1px #FFFFFF;">Build</div><div class="t" style="left:1588.52px;top:639.27px;font-size:26.2px;color:#5A5D78;-webkit-text-stroke:0.47px #5A5D78;transform:scaleX(1.0330);">Step: Build</div><div class="t" style="left:1595.19px;top:723.62px;font-size:27.5px;color:#0B0B0D;font-weight:700;transform:scaleX(0.9552);">Details</div><div class="t" style="left:1760.51px;top:724.04px;font-size:27.0px;color:#2C2D3B;-webkit-text-stroke:0.49px #2C2D3B;transform:scaleX(1.0408);">Input</div><div class="t" style="left:1904.49px;top:724.04px;font-size:27.0px;color:#2C2D3B;-webkit-text-stroke:0.49px #2C2D3B;transform:scaleX(1.0297);">Output</div><div class="t" style="left:1602.97px;top:821.78px;font-size:21.8px;color:#9293AB;-webkit-text-stroke:0.76px #9293AB;transform:scaleX(1.1316);">Started at:</div><div class="t" style="left:1803.40px;top:818.60px;font-size:21.5px;color:#6B6D85;-webkit-text-stroke:0.75px #6B6D85;transform:scaleX(1.1296);">3/27/2024, 2:35:52 PM</div><div class="t" style="left:1602.18px;top:865.68px;font-size:21.8px;color:#9293AB;-webkit-text-stroke:0.76px #9293AB;transform:scaleX(1.0934);">Ended at:</div><div class="t" style="left:1803.39px;top:862.50px;font-size:21.5px;color:#6B6D85;-webkit-text-stroke:0.75px #6B6D85;transform:scaleX(1.1413);">3/27/2024, 2:39:04 PM</div><div class="t" style="left:1602.11px;top:909.58px;font-size:21.8px;color:#9293AB;-webkit-text-stroke:0.76px #9293AB;transform:scaleX(1.1307);">Duration:</div><div class="t" style="left:1803.48px;top:906.40px;font-size:21.5px;color:#6B6D85;-webkit-text-stroke:0.75px #6B6D85;transform:scaleX(1.0439);">3m 11s</div><div class="t" style="left:1603.59px;top:953.48px;font-size:21.8px;color:#9293AB;-webkit-text-stroke:0.76px #9293AB;transform:scaleX(1.1315);">Timeout:</div><div class="t" style="left:1802.59px;top:950.30px;font-size:21.5px;color:#6B6D85;-webkit-text-stroke:0.75px #6B6D85;transform:scaleX(1.1055);">10h</div><div class="t" style="left:1578.95px;top:1041.47px;font-size:26.2px;color:#D9DAE5;transform:scaleX(0.8867);">Step Logs</div><div class="t" style="left:2598.54px;top:1044.20px;font-size:19.2px;color:#D9DAE5;">Console View</div><div class="b" style="left:1552px;top:1085px;width:1271px;height:312px;overflow:hidden"><div class="m" style="left:28.96px;top:29.91px;color:#F3F3FA">18326</div><div class="m" style="left:116.46px;top:29.91px;color:#F3F3FA">info</div><div class="m" style="left:203.28px;top:29.91px;color:#F3F3FA">3/27/2024, 2:38:59 PM</div><div class="m" style="left:553.40px;top:29.91px;color:#F3F3FA">[18:38:59]:</div><div class="m" style="left:950.20px;top:30.91px;color:#BC03C5">return node.nodeType === 1;</div><div class="m" style="left:28.96px;top:66.51px;color:#F3F3FA">18327</div><div class="m" style="left:116.46px;top:66.51px;color:#F3F3FA">info</div><div class="m" style="left:203.28px;top:66.51px;color:#F3F3FA">3/27/2024, 2:38:59 PM</div><div class="m" style="left:553.40px;top:66.51px;color:#F3F3FA">[18:38:59]:</div><div class="m" style="left:28.96px;top:103.11px;color:#F3F3FA">18328</div><div class="m" style="left:116.46px;top:103.11px;color:#F3F3FA">info</div><div class="m" style="left:203.28px;top:103.11px;color:#F3F3FA">3/27/2024, 2:38:59 PM</div><div class="m" style="left:553.40px;top:103.11px;color:#F3F3FA">[18:38:59]:</div><div class="m" style="left:778.60px;top:104.11px;color:#BC03C5">/Users/anka/Library/Developer/Xcode/DerivedData/</div><div class="m" style="left:28.96px;top:139.71px;color:#F3F3FA">18329</div><div class="m" style="left:116.46px;top:139.71px;color:#F3F3FA">info</div><div class="m" style="left:203.28px;top:139.71px;color:#F3F3FA">3/27/2024, 2:38:59 PM</div><div class="m" style="left:553.40px;top:139.71px;color:#F3F3FA">[18:38:59]:</div><div class="m" style="left:844.60px;top:140.71px;color:#BC03C5">(typeof performance === &quot;undefined&quot; ? Date : performance).now()</div><div class="m" style="left:28.96px;top:176.31px;color:#F3F3FA">18330</div><div class="m" style="left:116.46px;top:176.31px;color:#F3F3FA">info</div><div class="m" style="left:203.28px;top:176.31px;color:#F3F3FA">3/27/2024, 2:38:59 PM</div><div class="m" style="left:553.40px;top:176.31px;color:#F3F3FA">[18:38:59]:</div><div class="m" style="left:950.20px;top:177.31px;color:#00BE00">^~~~~~~~~~~</div><div class="m" style="left:28.96px;top:212.91px;color:#F3F3FA">18331</div><div class="m" style="left:116.46px;top:212.91px;color:#F3F3FA">info</div><div class="m" style="left:203.28px;top:212.91px;color:#F3F3FA">3/27/2024, 2:38:59 PM</div><div class="m" style="left:553.40px;top:212.91px;color:#F3F3FA">[18:38:59]:</div><div class="m" style="left:778.60px;top:213.91px;color:#BC03C5">/Users/anka/Library/Developer/Xcode/DerivedData/</div><div class="m" style="left:28.96px;top:249.51px;color:#F3F3FA">18332</div><div class="m" style="left:116.46px;top:249.51px;color:#F3F3FA">info</div><div class="m" style="left:203.28px;top:249.51px;color:#F3F3FA">3/27/2024, 2:38:59 PM</div><div class="m" style="left:553.40px;top:249.51px;color:#F3F3FA">[18:38:59]:</div><div class="m" style="left:844.60px;top:250.51px;color:#BC03C5">eval(body);</div><div class="m" style="left:28.96px;top:286.11px;color:#F3F3FA">18333</div><div class="m" style="left:116.46px;top:286.11px;color:#F3F3FA">info</div><div class="m" style="left:203.28px;top:286.11px;color:#F3F3FA">3/27/2024, 2:38:59 PM</div><div class="m" style="left:553.40px;top:286.11px;color:#F3F3FA">[18:38:59]:</div><div class="m" style="left:844.60px;top:287.11px;color:#00BE00">^~~~~~~~~~</div></div></body></html>
